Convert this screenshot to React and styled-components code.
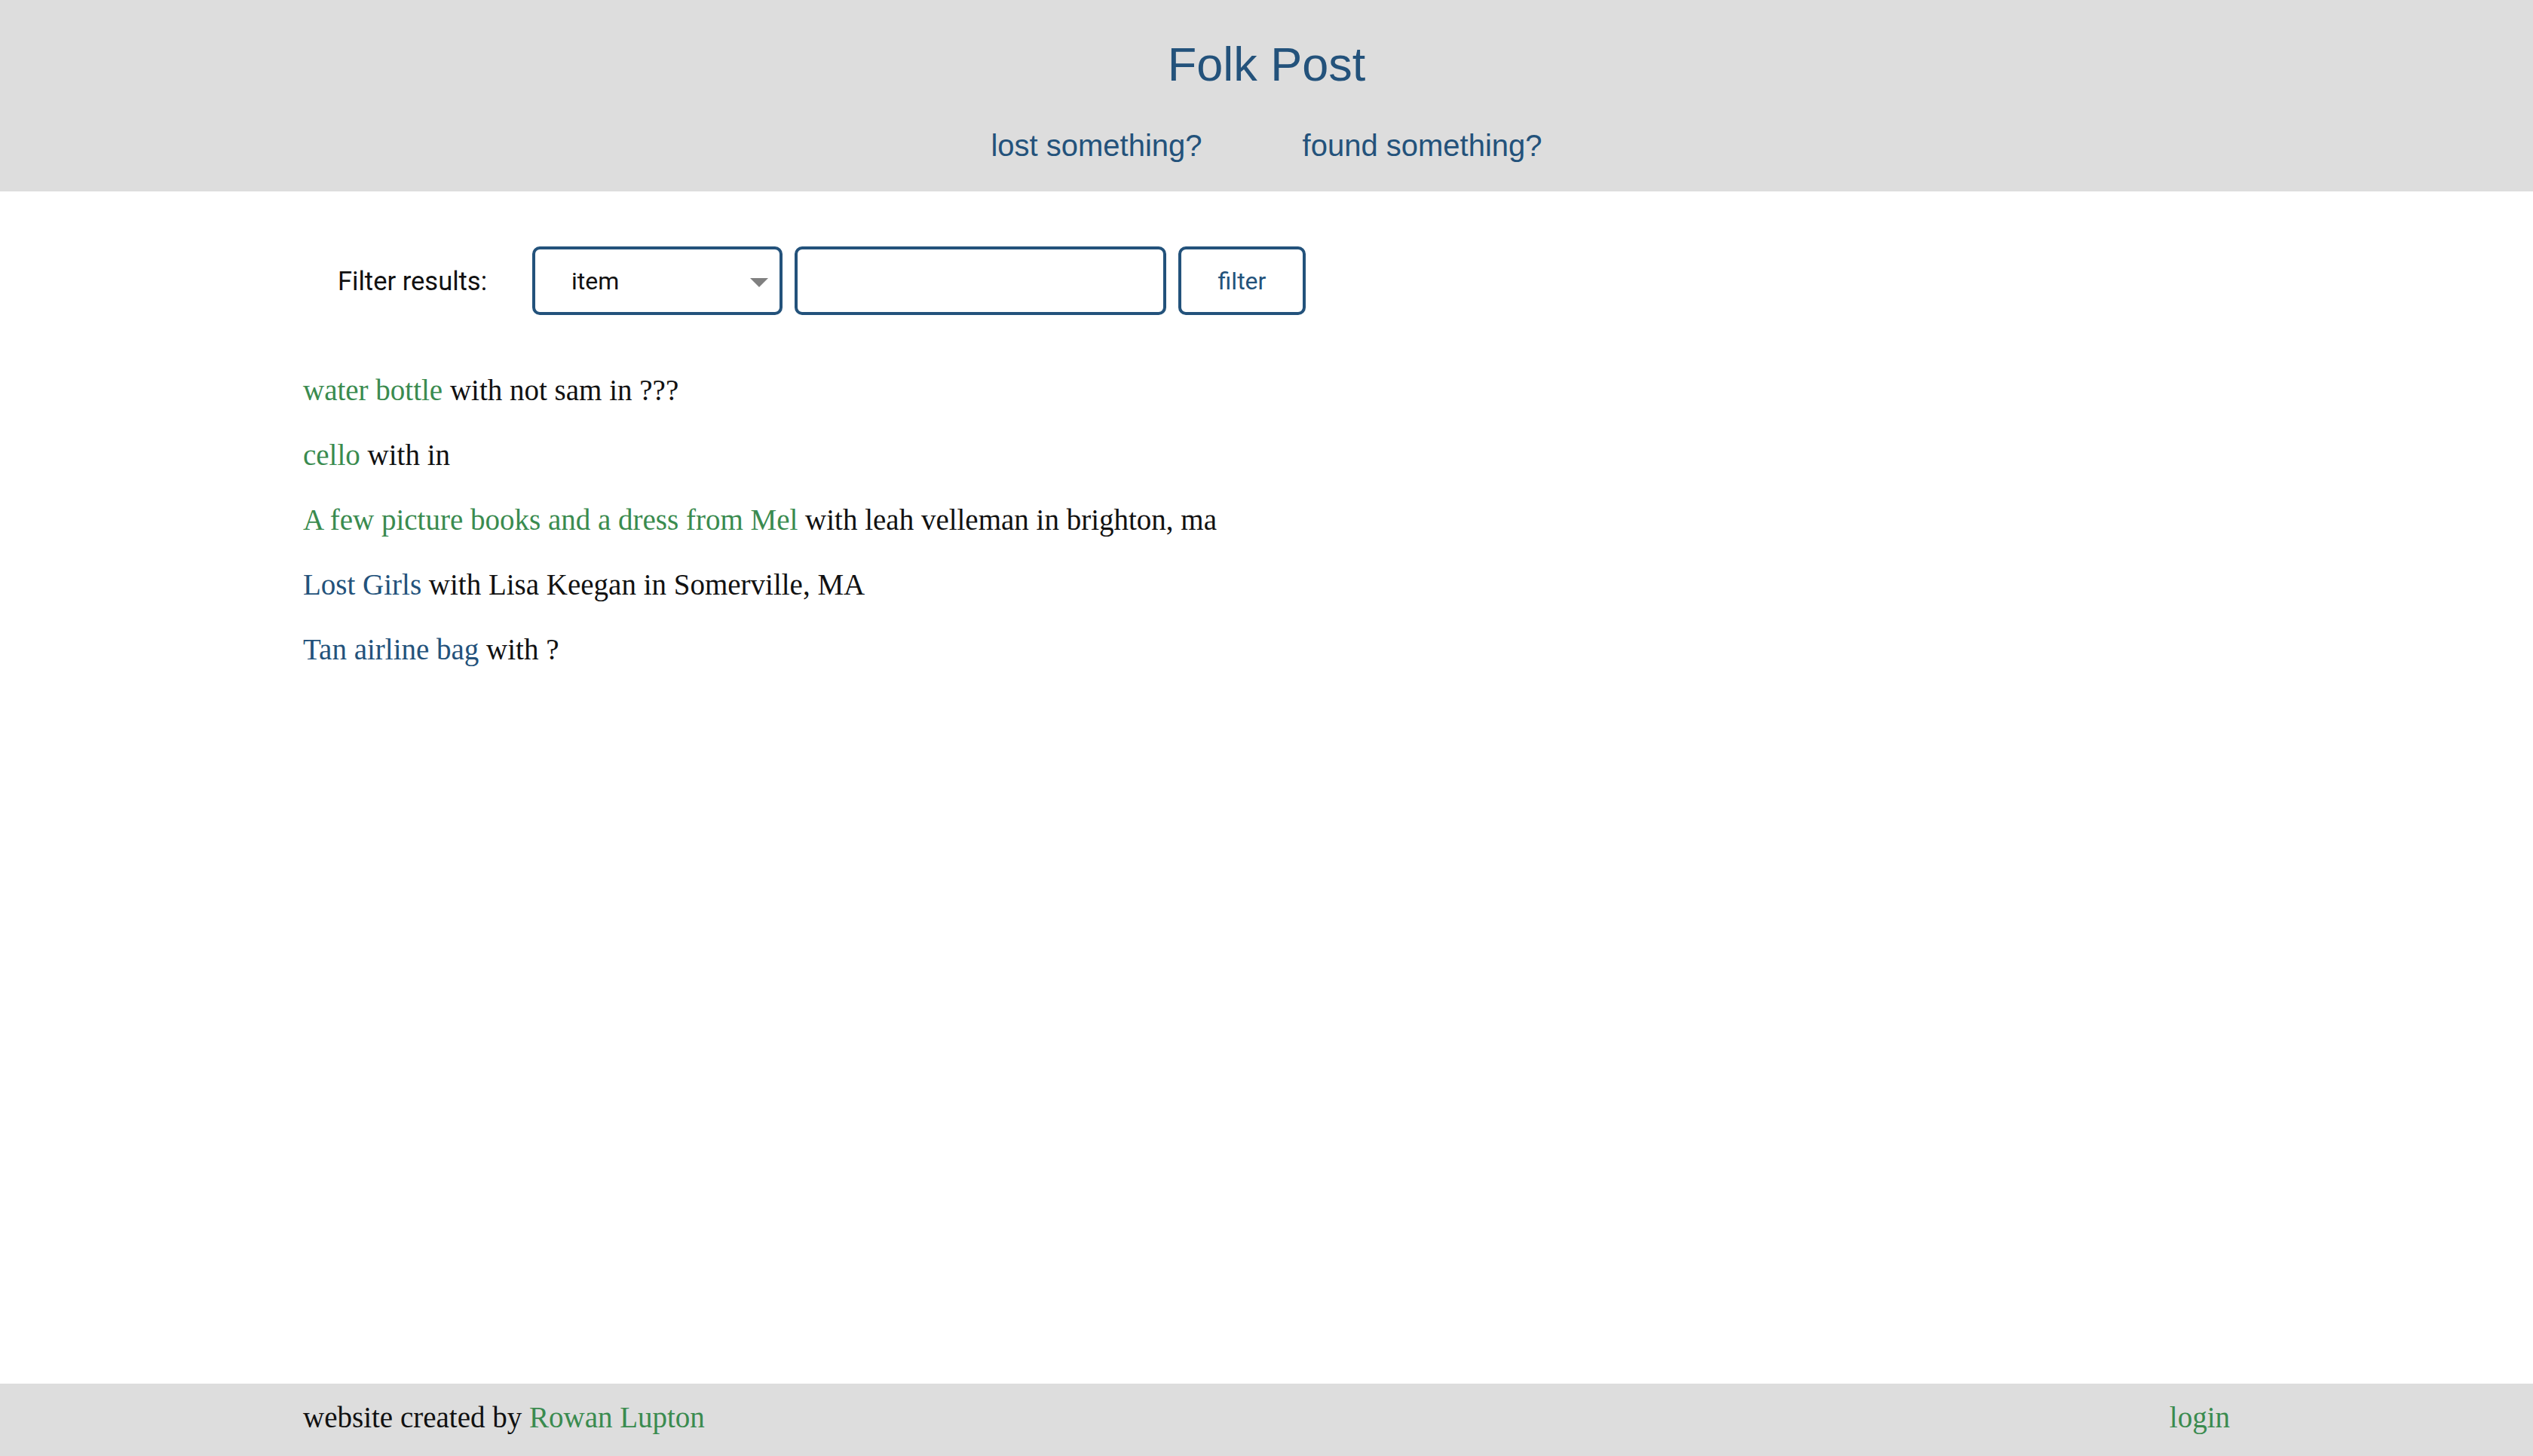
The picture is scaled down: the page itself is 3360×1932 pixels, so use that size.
import styled, { createGlobalStyle } from "styled-components";

const GlobalStyle = createGlobalStyle`
  html, body {
    margin: 0;
    padding: 0;
    background: #ffffff;
  }
  * {
    box-sizing: border-box;
  }
`;

const BLUE = "#23527b";
const GREEN = "#3a8b4f";

const Page = styled.div`
  min-height: 100vh;
  display: flex;
  flex-direction: column;
`;

const Header = styled.header`
  background: #dddddd;
  padding: 49px 0 38px;
  display: flex;
  flex-direction: column;
  align-items: center;
  font-family: "Liberation Sans", Arial, sans-serif;
`;

const Title = styled.h1`
  margin: 0;
  font-size: 63px;
  font-weight: 400;
  line-height: normal;
  color: ${BLUE};
`;

const Nav = styled.nav`
  margin-top: 50px;
  display: flex;
  justify-content: center;
  gap: 133px;
`;

const NavLink = styled.a`
  font-size: 40px;
  line-height: normal;
  color: ${BLUE};
  text-decoration: none;
`;

const Main = styled.main`
  flex: 1;
  width: 100%;
  max-width: 2556px;
  margin: 0 auto;
  padding-top: 73px;
`;

const FilterRow = styled.form`
  display: flex;
  align-items: center;
  gap: 16px;
  font-family: Roboto, "Liberation Sans", sans-serif;
`;

const FilterLabel = styled.label`
  padding: 0 44px 0 46px;
  font-size: 34.5px;
  color: #111111;
`;

const boxBase = `
  height: 91px;
  border: 4px solid ${BLUE};
  border-radius: 10px;
  background: #ffffff;
  font-family: Roboto, "Liberation Sans", sans-serif;
  font-size: 32px;
`;

const SelectBox = styled.div`
  ${boxBase}
  position: relative;
  width: 332px;
  display: flex;
  align-items: center;
  padding-left: 48px;
  color: #111111;
`;

const Caret = styled.span`
  position: absolute;
  right: 15px;
  top: 38px;
  width: 0;
  height: 0;
  border-left: 12px solid transparent;
  border-right: 12px solid transparent;
  border-top: 12px solid #808080;
`;

const TextInput = styled.input`
  ${boxBase}
  width: 493px;
  padding: 0 20px;
  outline: none;
`;

const FilterButton = styled.button`
  ${boxBase}
  width: 169px;
  color: ${BLUE};
  cursor: pointer;
`;

const List = styled.ul`
  list-style: none;
  margin: 0;
  padding: 57px 0 0;
  font-family: "Liberation Serif", "Times New Roman", serif;
  font-size: 39px;
`;

const Item = styled.li`
  line-height: 86px;
  color: #111111;
`;

const ItemLink = styled.a`
  color: ${(p) => (p.$found ? BLUE : GREEN)};
  text-decoration: none;
`;

const Footer = styled.footer`
  background: #dddddd;
  height: 96px;
  padding-top: 22px;
  font-family: "Liberation Serif", "Times New Roman", serif;
  font-size: 39px;
  line-height: normal;
  color: #111111;
`;

const FooterInner = styled.div`
  max-width: 2556px;
  margin: 0 auto;
  display: flex;
  justify-content: space-between;
`;

const FooterLink = styled.a`
  color: ${GREEN};
  text-decoration: none;
`;

const posts = [
  { title: "water bottle", rest: "with not sam in ???", found: false },
  { title: "cello", rest: "with in", found: false },
  {
    title: "A few picture books and a dress from Mel",
    rest: "with leah velleman in brighton, ma",
    found: false,
  },
  { title: "Lost Girls", rest: "with Lisa Keegan in Somerville, MA", found: true },
  { title: "Tan airline bag", rest: "with ?", found: true },
];

export default function App() {
  return (
    <Page>
      <GlobalStyle />
      <Header>
        <Title>Folk Post</Title>
        <Nav>
          <NavLink href="#">lost something?</NavLink>
          <NavLink href="#">found something?</NavLink>
        </Nav>
      </Header>
      <Main>
        <FilterRow onSubmit={(e) => e.preventDefault()}>
          <FilterLabel>Filter results:</FilterLabel>
          <SelectBox>
            item
            <Caret />
          </SelectBox>
          <TextInput type="text" />
          <FilterButton type="submit">filter</FilterButton>
        </FilterRow>
        <List>
          {posts.map((p) => (
            <Item key={p.title}>
              <ItemLink href="#" $found={p.found}>
                {p.title}
              </ItemLink>{" "}
              {p.rest}
            </Item>
          ))}
        </List>
      </Main>
      <Footer>
        <FooterInner>
          <span>
            website created by <FooterLink href="#">Rowan Lupton</FooterLink>
          </span>
          <FooterLink href="#">login</FooterLink>
        </FooterInner>
      </Footer>
    </Page>
  );
}
